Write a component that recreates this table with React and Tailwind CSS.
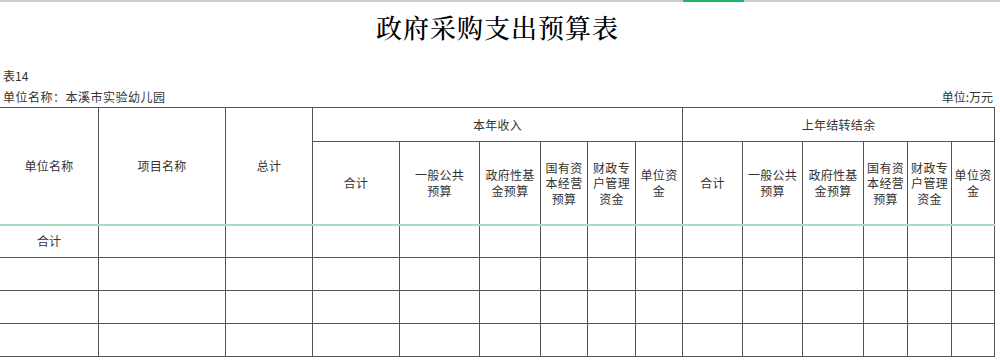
import React from "react";

const cols = [99, 127, 87, 87, 80, 61, 47, 48, 47, 60, 60, 61, 44, 44, 43];

const sub = [
  ["合计"],
  ["一般公共", "预算"],
  ["政府性基", "金预算"],
  ["国有资", "本经营", "预算"],
  ["财政专", "户管理", "资金"],
  ["单位资", "金"],
];

function Lines({ lines }) {
  return (
    <div className="leading-[15.5px]">
      {lines.map((l, i) => (
        <div key={i}>{l}</div>
      ))}
    </div>
  );
}

export default function App() {
  const cell = "border border-[#555] text-center align-middle p-0";
  const headBottom = "border-b-2 border-b-[#a8dcc0]";
  return (
    <div className="w-[1000px] h-[360px] overflow-hidden bg-white text-[#333] [font-family:'Noto_Sans_CJK_SC','Noto_Sans',sans-serif] text-[12px]">
      <div className="flex h-[2px]">
        <div className="w-[683px] bg-[#c8cbd3]" />
        <div className="w-[61px] bg-[#1fb36a]" />
        <div className="flex-1 bg-[#c8cbd3]" />
      </div>
      <div className="w-[995px] h-[48px] flex items-center justify-center">
        <div className="text-[26px] tracking-[1px] text-black font-medium [font-family:'Noto_Serif_CJK_SC','Noto_Sans_CJK_SC',serif]">
          政府采购支出预算表
        </div>
      </div>
      <div className="h-[15px]" />
      <div className="h-[22px] flex items-center pl-[3px]">表14</div>
      <div className="h-[20px] w-[995px] flex items-center justify-between pl-[3px] pr-[2px]">
        <div className="tracking-[0.5px]">单位名称：本溪市实验幼儿园</div>
        <div>单位:万元</div>
      </div>
      <table className="table-fixed border-collapse w-[996px] ml-[-1px]">
        <colgroup>
          {cols.map((w, i) => (
            <col key={i} style={{ width: w }} />
          ))}
        </colgroup>
        <thead>
          <tr className="h-[34px]">
            <th rowSpan={2} className={`${cell} ${headBottom} font-normal tracking-[0.3px]`}>单位名称</th>
            <th rowSpan={2} className={`${cell} ${headBottom} font-normal tracking-[0.3px]`}>项目名称</th>
            <th rowSpan={2} className={`${cell} ${headBottom} font-normal tracking-[0.3px]`}>总计</th>
            <th colSpan={6} className={`${cell} font-normal tracking-[0.3px]`}>本年收入</th>
            <th colSpan={6} className={`${cell} font-normal tracking-[0.3px]`}>上年结转结余</th>
          </tr>
          <tr className="h-[83px]">
            {[...sub, ...sub].map((s, i) => (
              <th key={i} className={`${cell} ${headBottom} font-normal tracking-[0.3px]`}>
                <Lines lines={s} />
              </th>
            ))}
          </tr>
        </thead>
        <tbody>
          {[0, 1, 2, 3].map((r) => (
            <tr key={r} className="h-[33px]">
              {cols.map((_, c) => (
                <td key={c} className={cell}>
                  {r === 0 && c === 0 ? "合计" : ""}
                </td>
              ))}
            </tr>
          ))}
        </tbody>
      </table>
    </div>
  );
}
